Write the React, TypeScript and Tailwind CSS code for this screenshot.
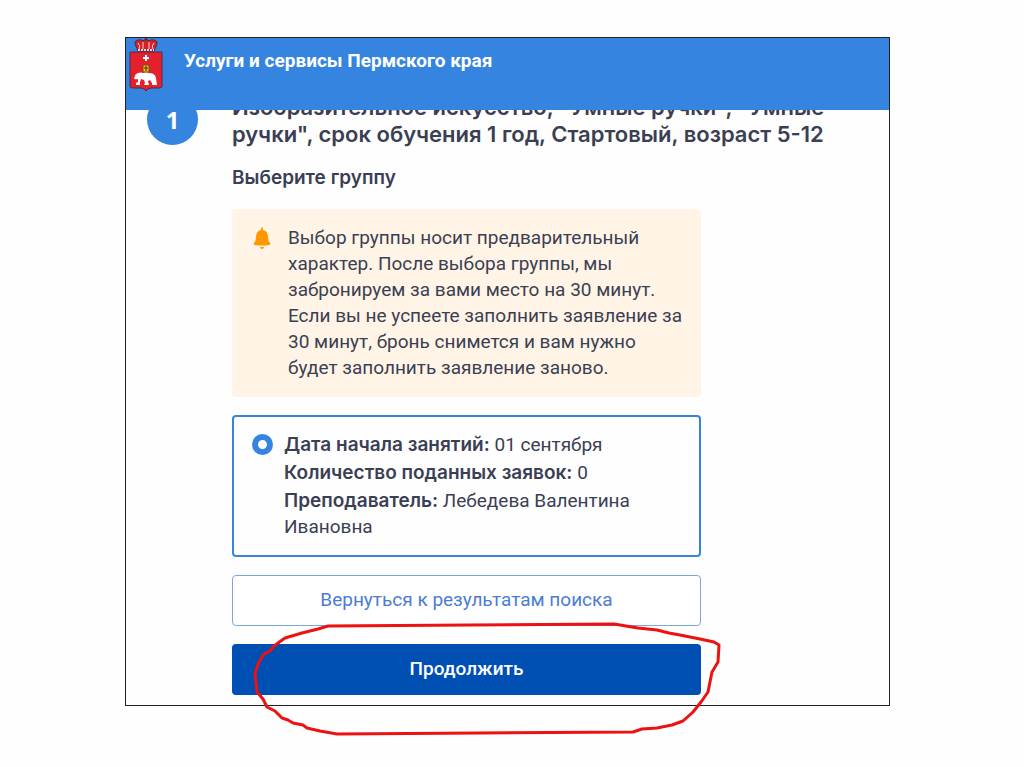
const alertLines = [
    "Выбор группы носит предварительный",
    "характер. После выбора группы, мы",
    "забронируем за вами место на 30 минут.",
    "Если вы не успеете заполнить заявление за",
    "30 минут, бронь снимется и вам нужно",
    "будет заполнить заявление заново.",
];

function Emblem() {
    return (
        <svg width="36" height="56" viewBox="0 0 36 56" aria-hidden="true">
            <path d="M10 13 7 6q-1-3 3-4 3-1 5 1l3-3 3 3q2-2 5-1 4 1 3 4l-3 7z" fill="#d8202c" stroke="#4b2b3a" />
            <path d="M10 5q3 3 1 6M26 5q-3 3-1 6M15 4v7M21 4v7" stroke="#f0d3d0" fill="none" />
            <path d="M10 12h16" stroke="#f0d3d0" strokeWidth="2" strokeDasharray="2 1" />
            <path d="M18 0v4M16 2h4" stroke="#6b3b20" />
            <path d="M2 14h32v34q0 2-3 2h-8q-3 0-5 3-2-3-5-3H5q-3 0-3-2z" fill="#e3202b" stroke="#5b2740" />
            <path d="M18 17v6M15 20h6" stroke="#fff" strokeWidth="2" />
            <path d="M15 27h6v7h-6z" fill="#f3c01c" stroke="#7b4a12" />
            <path d="M18 28v5M16 30h4" stroke="#4a2a10" />
            <path d="M7 38q0-2 3-3 3-1 5 0 3-1 6 0 6 0 7 5l1 7h-5v-2l-2-3-2 1 1 4h-5l1-2-1-3-3-1-1 3v3H8v-2l2-1v-3q-4 1-4-1z" fill="#fff" />
        </svg>
    );
}

function Bell() {
    return (
        <svg className="mt-[2px] shrink-0" width="18" height="24" viewBox="0 0 18 24" aria-hidden="true">
            <path d="M9 0q1 0 1 3 5 1 5 7 0 4 2 6 1 2-1 2-7 1-14 0-2 0-1-2 2-2 2-6 0-6 5-7 0-3 1-3z" fill="#ff9800" />
            <path d="M7 20h4q0 2-2 2t-2-2z" fill="#ff9800" />
        </svg>
    );
}

export default function App() {
    return (
        <div className="min-h-screen bg-[#fefefe] pt-[37px] pr-[134px] pb-[61px] pl-[125px] font-[Roboto,sans-serif] text-[#3b3f54]">
            <div className="border border-[#222]">
                <header className="relative z-10 flex h-[72px] items-start gap-5 bg-[#3584e0] pl-[2px]">
                    <Emblem />
                    <p className="mt-[10px] text-[19px] leading-[26px] font-bold text-white">Услуги и сервисы Пермского края</p>
                </header>

                <main className="-mt-4 flex items-start gap-[34px] pr-12 pb-[10px] pl-[21px]">
                    <div className="flex size-[51px] shrink-0 items-center justify-center rounded-full bg-[#3584e0] font-['Noto_Sans',sans-serif] text-2xl font-bold text-white">
                        1
                    </div>

                    <div className="min-w-0 flex-1">
                        <h1 className="font-[Inter,sans-serif] text-[22px] leading-[27px] font-semibold whitespace-nowrap">
                            Изобразительное искусство, "Умные ручки", "Умные
                            <br />
                            ручки", срок обучения 1 год, Стартовый, возраст 5-12
                        </h1>

                        <form className="mt-4 flex max-w-[469px] flex-col gap-[18px]">
                            <h2 className="font-[Inter,sans-serif] text-[19px] leading-[27px] font-semibold">Выберите группу</h2>

                            <div className="flex gap-[17px] rounded-sm bg-[#fff4e5] py-4 pl-[21px] text-[19px] leading-[26px] whitespace-nowrap">
                                <Bell />
                                <p>
                                    {alertLines.map((line) => (
                                        <span className="block" key={line}>{line} </span>
                                    ))}
                                </p>
                            </div>

                            <label className="flex gap-[11px] rounded-sm border-2 border-[#3584e0] px-[18px] py-[15px] text-[19px] leading-[26px] whitespace-nowrap">
                                <input
                                    type="radio"
                                    name="group"
                                    defaultChecked
                                    className="mt-[2px] size-[21px] shrink-0 appearance-none rounded-full border-[6px] border-[#3584e0] bg-white"
                                />
                                <span className="flex flex-col gap-[2px]">
                                    <span><b className="font-[Inter,sans-serif] font-semibold">Дата начала занятий:</b> 01 сентября</span>
                                    <span><b className="font-[Inter,sans-serif] font-semibold">Количество поданных заявок:</b> 0</span>
                                    <span><b className="font-[Inter,sans-serif] font-semibold">Преподаватель:</b> Лебедева Валентина<br />Ивановна</span>
                                </span>
                            </label>

                            <button type="button" className="h-[51px] rounded-sm border border-[#7ba7dc] bg-white text-[19px] text-[#4a7dd6]">
                                Вернуться к результатам поиска
                            </button>

                            <div className="relative">
                                <button type="button" className="h-[51px] w-full rounded-sm bg-[#004fb3] text-[19px] font-medium text-white">
                                    Продолжить
                                </button>
                                <svg
                                    className="pointer-events-none absolute -top-[26px] left-[18px]"
                                    width="475"
                                    height="120"
                                    viewBox="250 618 475 120"
                                    fill="none"
                                    aria-hidden="true"
                                >
                                    <path
                                        d="M328 626 318 629 302 633 285 638 278 643 273 647 270 651 264 654 259 662 255 673 257 692 263 699 267 707 275 711 282 718 288 720 293 723 303 725 307 728 320 731 337 734 480 733 633 732 642 729 657 728 672 725 683 721 693 712 701 702 708 692 710 682 712 672 718 662 719 645 714 642 700 639 680 635 669 633 657 630 638 628 614 624 470 625Z"
                                        stroke="#ee1111"
                                        strokeWidth="3"
                                        strokeLinejoin="round"
                                    />
                                </svg>
                            </div>
                        </form>
                    </div>
                </main>
            </div>
        </div>
    );
}
